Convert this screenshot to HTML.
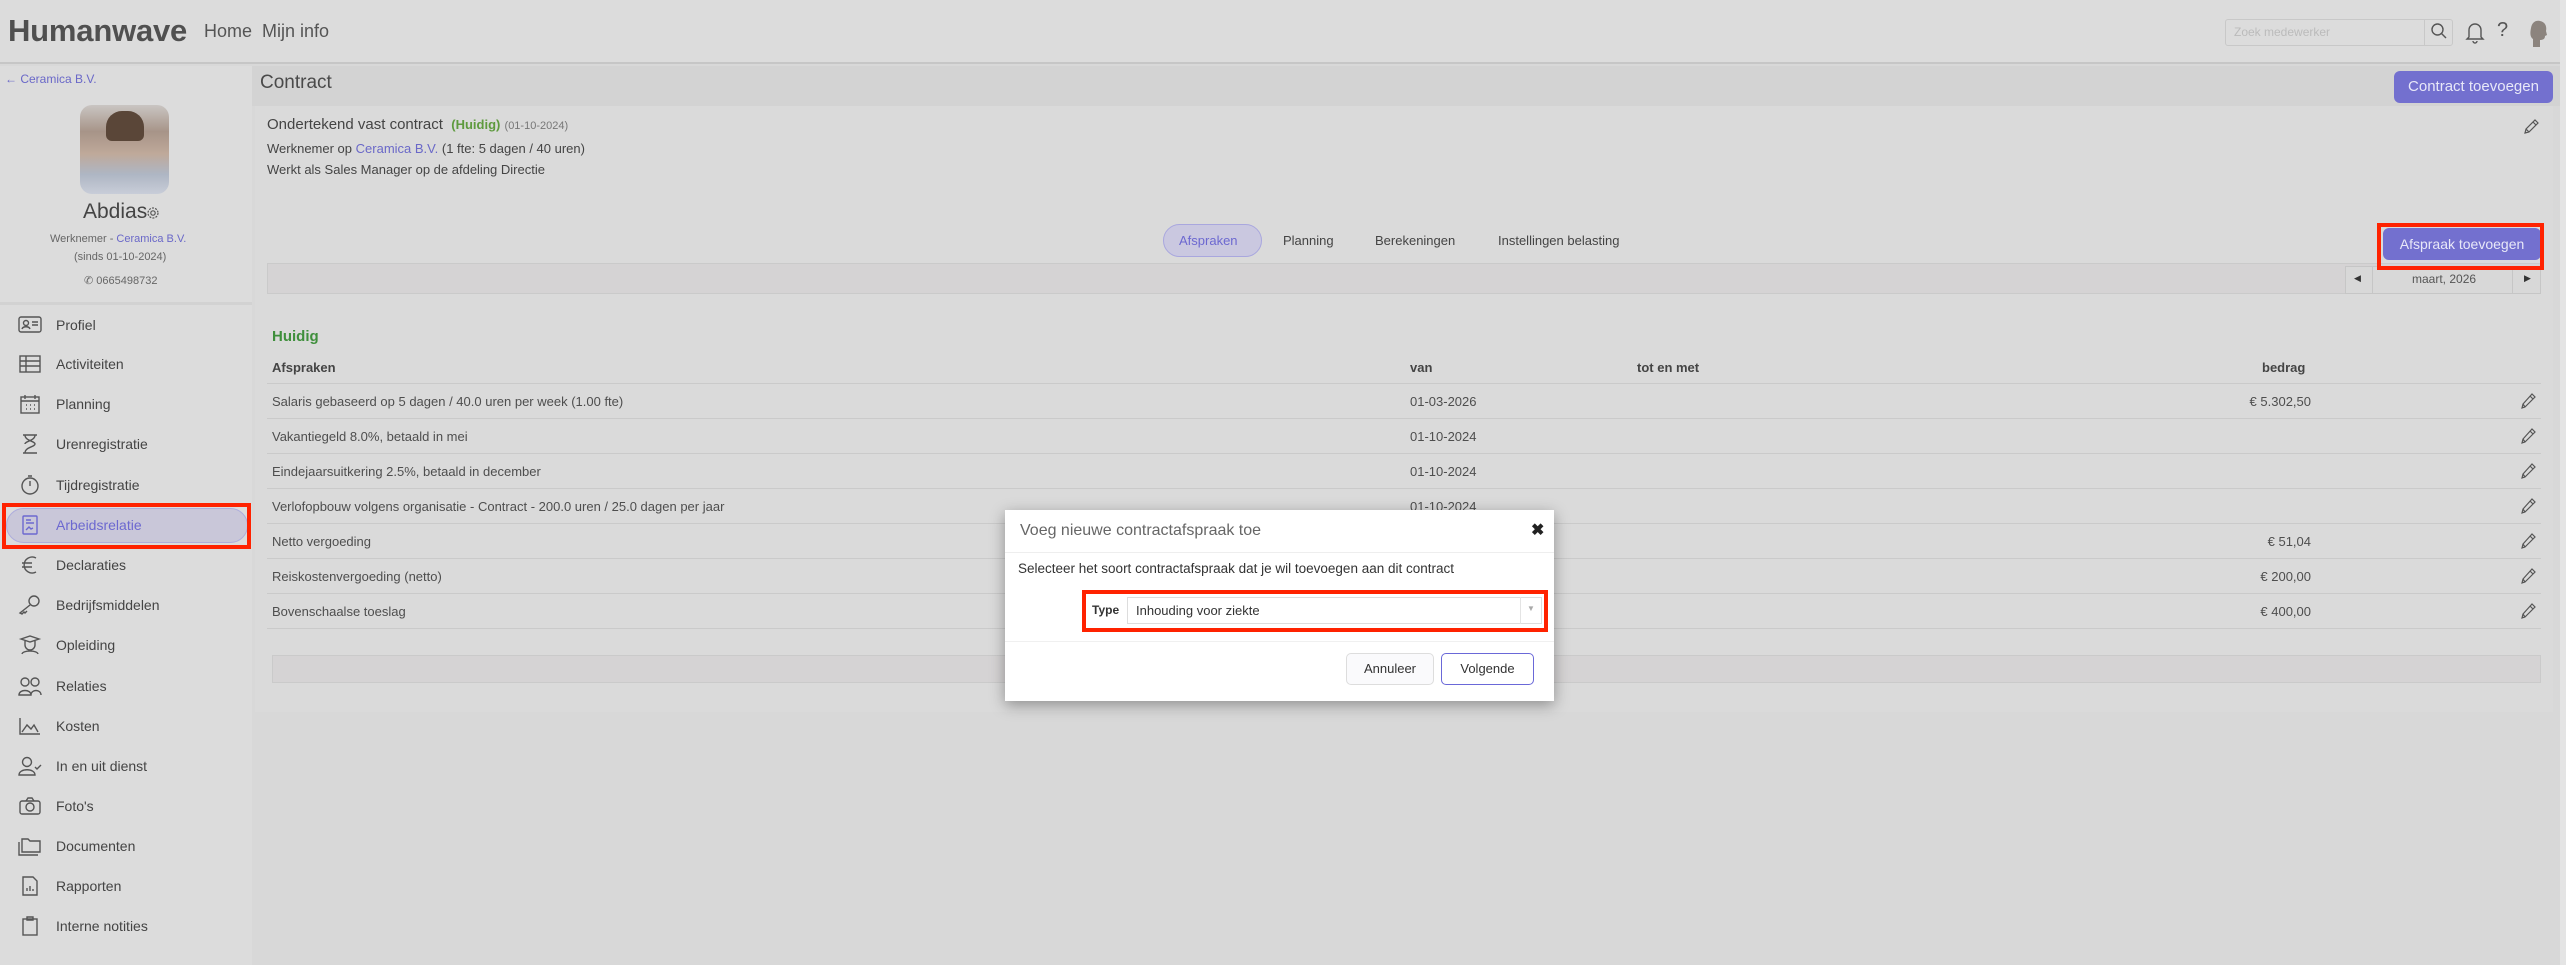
<!DOCTYPE html>
<html><head><meta charset="utf-8"><style>
*{box-sizing:border-box;margin:0;padding:0}
body{width:2566px;height:965px;overflow:hidden;background:#d8d8d8;font-family:"Liberation Sans",sans-serif;color:#4a4a4a;position:relative}
.a{position:absolute;white-space:nowrap}
.nav{position:absolute;left:18px;height:22px;font-size:14px;color:#444;display:flex;align-items:center}
.nav svg{width:24px;height:20px;margin-right:14px;stroke:#555;fill:none;stroke-width:1.4;flex:none}
.row{position:absolute;left:267px;width:2274px;height:35px;border-bottom:1px solid #cacaca;font-size:13px;color:#4e4e4e}
.row span{position:absolute;top:10px}
.pen{position:absolute;left:2253px;top:8px}
.btn{position:absolute;background:#7370cf;color:#e8e8f8;border-radius:6px;font-size:15px;text-align:center}
</style></head><body>
<!-- header -->
<div class="a" style="left:0;top:0;width:2560px;height:64px;background:#dcdcdc;border-bottom:2px solid #c6c6c6"></div>
<div class="a" style="left:8px;top:13px;font-size:31px;font-weight:bold;color:#505050;letter-spacing:-0.2px">Humanwave</div>
<div class="a" style="left:204px;top:21px;font-size:18px;color:#555">Home</div>
<div class="a" style="left:262px;top:21px;font-size:18px;color:#555">Mijn info</div>
<div class="a" style="left:2225px;top:19px;width:228px;height:27px;border:1px solid #c8c8c8;border-radius:3px"></div>
<div class="a" style="left:2424px;top:19px;width:1px;height:27px;background:#c8c8c8"></div>
<div class="a" style="left:2234px;top:25px;font-size:12px;color:#bbb">Zoek medewerker</div>
<svg class="a" style="left:2430px;top:22px" width="18" height="18" viewBox="0 0 18 18" fill="none" stroke="#555" stroke-width="1.4"><circle cx="7.5" cy="7.5" r="5.5"/><path d="M11.5 11.5L16 16"/></svg>
<svg class="a" style="left:2465px;top:20px" width="20" height="24" viewBox="0 0 20 24" fill="none" stroke="#555" stroke-width="1.4"><path d="M4 17V10a6 6 0 0112 0v7l2 2H2z"/><path d="M8 21a2 2 0 004 0"/></svg>
<div class="a" style="left:2497px;top:19px;font-size:20px;color:#555">?</div>
<svg class="a" style="left:2527px;top:19px" width="22" height="28" viewBox="0 0 22 28"><path d="M6 28V20C3 18 3 14 4 9 5 3 9 1 13 2c5 1 7 5 6 10l1 4-2 1c0 3-2 4-5 4v7z" fill="#8c847e"/></svg>
<div class="a" style="left:2560px;top:0;width:6px;height:965px;background:#e4e4e4"></div>

<!-- sidebar -->
<div class="a" style="left:0;top:66px;width:252px;height:899px;background:#dcdcdc"></div>
<div class="a" style="left:5px;top:72px;font-size:12px;color:#6a68c8">&#8592; Ceramica B.V.</div>
<div class="a" style="left:80px;top:105px;width:89px;height:89px;border-radius:12px;background:linear-gradient(180deg,#c9c5c2 0%,#a79488 30%,#bfa99a 55%,#aeb6c4 78%,#c8cdd8 100%)"></div>
<div class="a" style="left:106px;top:111px;width:38px;height:30px;border-radius:16px 16px 6px 6px;background:#5a4638"></div>
<div class="a" style="left:83px;top:200px;font-size:21px;color:#444">Abdias</div>
<svg class="a" style="left:146px;top:206px" width="14" height="14" viewBox="0 0 14 14" fill="none" stroke="#555" stroke-width="1.2"><circle cx="7" cy="7" r="2.2"/><circle cx="7" cy="7" r="5" stroke-dasharray="2 1.2"/></svg>
<div class="a" style="left:50px;top:233px;font-size:11px;color:#666">Werknemer - <span style="color:#6a68c8">Ceramica B.V.</span></div>
<div class="a" style="left:74px;top:251px;font-size:11px;color:#666">(sinds 01-10-2024)</div>
<div class="a" style="left:84px;top:274px;font-size:11px;color:#666">&#9990; 0665498732</div>
<div class="a" style="left:0;top:302px;width:252px;height:3px;background:#d2d2d2"></div>

<div class="a" style="left:6px;top:508px;width:242px;height:35px;border-radius:18px;background:#c9c7d9;border:1px solid #aeaddc"></div>
<div class="a" style="left:2px;top:503px;width:249px;height:46px;border:4px solid #ff2200"></div>

<div class="nav" style="top:314px"><svg viewBox="0 0 24 20"><rect x="1" y="2" width="22" height="15" rx="2"/><circle cx="8" cy="8" r="2.5"/><path d="M4 14c1-3 7-3 8 0M14 7h6M14 10h6"/></svg>Profiel</div>
<div class="nav" style="top:353px"><svg viewBox="0 0 24 20"><rect x="2" y="2" width="20" height="16"/><path d="M2 7h20M2 12h20M8 2v16"/></svg>Activiteiten</div>
<div class="nav" style="top:393px"><svg viewBox="0 0 24 20"><rect x="3" y="3" width="18" height="16"/><path d="M3 7h18M7 1v4M17 1v4M8 11h1M12 11h1M16 11h1M8 15h1M12 15h1M16 15h1"/></svg>Planning</div>
<div class="nav" style="top:433px"><svg viewBox="0 0 24 20"><path d="M5 1h14M5 19h14M7 1c0 6 10 6 10 9s-10 3-10 9M17 1c0 6-10 6-10 9"/></svg>Urenregistratie</div>
<div class="nav" style="top:474px"><svg viewBox="0 0 24 20"><circle cx="12" cy="11" r="8"/><path d="M12 6v5M10 1h4"/></svg>Tijdregistratie</div>
<div class="nav" style="top:514px;color:#6c68d0"><svg viewBox="0 0 24 20" style="stroke:#6c68d0"><rect x="5" y="1" width="14" height="18" rx="1"/><path d="M8 5h5M8 8h8M8 15l3-3 2 2 2-1"/></svg>Arbeidsrelatie</div>
<div class="nav" style="top:554px"><svg viewBox="0 0 24 20"><path d="M18 3a8 8 0 100 14M4 8h10M4 12h10"/></svg>Declaraties</div>
<div class="nav" style="top:594px"><svg viewBox="0 0 24 20"><circle cx="16" cy="6" r="5"/><path d="M12 10L2 18l2 1 2-2 1 1 2-2"/></svg>Bedrijfsmiddelen</div>
<div class="nav" style="top:634px"><svg viewBox="0 0 24 20"><path d="M3 4l9-3 9 3-9 3zM7 6v4a5 5 0 0010 0V6M4 19c1-4 15-4 16 0"/></svg>Opleiding</div>
<div class="nav" style="top:675px"><svg viewBox="0 0 24 20"><circle cx="7" cy="6" r="4"/><circle cx="17" cy="6" r="4"/><path d="M1 19c0-6 12-6 12 0zM13 19c0-6 10-6 10 0"/></svg>Relaties</div>
<div class="nav" style="top:715px"><svg viewBox="0 0 24 20"><path d="M2 2v16h20M4 16l5-7 4 4 3-4 4 7"/></svg>Kosten</div>
<div class="nav" style="top:755px"><svg viewBox="0 0 24 20"><circle cx="9" cy="6" r="4.5"/><path d="M1 19c0-7 16-7 16 0zM17 11l2 2 4-4"/></svg>In en uit dienst</div>
<div class="nav" style="top:795px"><svg viewBox="0 0 24 20"><rect x="2" y="5" width="20" height="13" rx="2"/><circle cx="12" cy="11" r="4"/><path d="M8 5l2-3h4l2 3"/></svg>Foto's</div>
<div class="nav" style="top:835px"><svg viewBox="0 0 24 20"><path d="M1 6v13h19M4 3h6l2 2h10v11H4z"/></svg>Documenten</div>
<div class="nav" style="top:875px"><svg viewBox="0 0 24 20"><path d="M5 1h10l4 4v14H5zM9 15v-3M12 15v-5M15 15v-2"/></svg>Rapporten</div>
<div class="nav" style="top:915px"><svg viewBox="0 0 24 20"><rect x="5" y="3" width="14" height="16"/><path d="M9 1h6v3H9z"/></svg>Interne notities</div>

<!-- content -->
<div class="a" style="left:252px;top:66px;width:2308px;height:40px;background:#d3d3d3"></div>
<div class="a" style="left:260px;top:72px;font-size:19px;color:#4a4a4a">Contract</div>
<div class="btn" style="left:2394px;top:71px;width:159px;height:32px;line-height:32px">Contract toevoegen</div>
<div class="a" style="left:255px;top:106px;width:2298px;height:606px;background:#dadada"></div>
<div class="a" style="left:267px;top:116px;font-size:15px;color:#444">Ondertekend vast contract &nbsp;<b style="color:#5e9a3e;font-size:13px">(Huidig)</b> <span style="font-size:11px;color:#777">(01-10-2024)</span></div>
<div class="a" style="left:267px;top:141px;font-size:13px;color:#444">Werknemer op <span style="color:#6a68c8">Ceramica B.V.</span> (1 fte: 5 dagen / 40 uren)</div>
<div class="a" style="left:267px;top:162px;font-size:13px;color:#444">Werkt als Sales Manager op de afdeling Directie</div>
<svg class="a" style="left:2522px;top:118px" width="18" height="18" viewBox="0 0 18 18" fill="none" stroke="#555" stroke-width="1.2"><path d="M3 15l1-4 9-9 3 3-9 9zM4 11l3 3M11 4l3 3"/></svg>

<div class="a" style="left:1163px;top:224px;width:99px;height:33px;border-radius:17px;background:#cac8e0;border:1px solid #a9a7de"></div>
<div class="a" style="left:1179px;top:233px;font-size:13px;color:#6c68d0">Afspraken</div>
<div class="a" style="left:1283px;top:233px;font-size:13px;color:#444">Planning</div>
<div class="a" style="left:1375px;top:233px;font-size:13px;color:#444">Berekeningen</div>
<div class="a" style="left:1498px;top:233px;font-size:13px;color:#444">Instellingen belasting</div>
<div class="a" style="left:267px;top:263px;width:2274px;height:31px;background:#d5d3d4;border:1px solid #cacaca"></div>
<div class="a" style="left:2345px;top:266px;width:196px;height:28px;border:1px solid #c6c6c6;background:#d8d8d8"></div>
<div class="a" style="left:2372px;top:266px;width:1px;height:28px;background:#c6c6c6"></div>
<div class="a" style="left:2512px;top:266px;width:1px;height:28px;background:#c6c6c6"></div>
<div class="a" style="left:2354px;top:273px;font-size:9px;color:#333">&#9664;</div>
<div class="a" style="left:2524px;top:273px;font-size:9px;color:#333">&#9654;</div>
<div class="a" style="left:2412px;top:272px;font-size:12px;color:#555">maart, 2026</div>
<div class="btn" style="left:2383px;top:228px;width:158px;height:32px;line-height:32px;font-size:14px">Afspraak toevoegen</div>
<div class="a" style="left:2377px;top:223px;width:167px;height:47px;border:4px solid #ff2200"></div>

<div class="a" style="left:272px;top:328px;font-size:15px;font-weight:bold;color:#3f8f3c">Huidig</div>
<div class="a" style="left:272px;top:360px;font-size:13px;font-weight:bold;color:#444">Afspraken</div>
<div class="a" style="left:1410px;top:360px;font-size:13px;font-weight:bold;color:#444">van</div>
<div class="a" style="left:1637px;top:360px;font-size:13px;font-weight:bold;color:#444">tot en met</div>
<div class="a" style="left:2262px;top:360px;font-size:13px;font-weight:bold;color:#444">bedrag</div>
<div class="a" style="left:267px;top:383px;width:2274px;height:1px;background:#cacaca"></div>

<div class="row" style="top:384px"><span style="left:5px">Salaris gebaseerd op 5 dagen / 40.0 uren per week (1.00 fte)</span><span style="left:1143px">01-03-2026</span><span style="right:230px">€ 5.302,50</span><svg class="pen" width="16" height="18" viewBox="0 0 16 18" fill="none" stroke="#555" stroke-width="1.2"><path d="M2 16l1-4 9-10 3 3-10 10zM3 12l2 3M10 4l3 3"/></svg></div>
<div class="row" style="top:419px"><span style="left:5px">Vakantiegeld 8.0%, betaald in mei</span><span style="left:1143px">01-10-2024</span><svg class="pen" width="16" height="18" viewBox="0 0 16 18" fill="none" stroke="#555" stroke-width="1.2"><path d="M2 16l1-4 9-10 3 3-10 10zM3 12l2 3M10 4l3 3"/></svg></div>
<div class="row" style="top:454px"><span style="left:5px">Eindejaarsuitkering 2.5%, betaald in december</span><span style="left:1143px">01-10-2024</span><svg class="pen" width="16" height="18" viewBox="0 0 16 18" fill="none" stroke="#555" stroke-width="1.2"><path d="M2 16l1-4 9-10 3 3-10 10zM3 12l2 3M10 4l3 3"/></svg></div>
<div class="row" style="top:489px"><span style="left:5px">Verlofopbouw volgens organisatie - Contract - 200.0 uren / 25.0 dagen per jaar</span><span style="left:1143px">01-10-2024</span><svg class="pen" width="16" height="18" viewBox="0 0 16 18" fill="none" stroke="#555" stroke-width="1.2"><path d="M2 16l1-4 9-10 3 3-10 10zM3 12l2 3M10 4l3 3"/></svg></div>
<div class="row" style="top:524px"><span style="left:5px">Netto vergoeding</span><span style="right:230px">€ 51,04</span><svg class="pen" width="16" height="18" viewBox="0 0 16 18" fill="none" stroke="#555" stroke-width="1.2"><path d="M2 16l1-4 9-10 3 3-10 10zM3 12l2 3M10 4l3 3"/></svg></div>
<div class="row" style="top:559px"><span style="left:5px">Reiskostenvergoeding (netto)</span><span style="right:230px">€ 200,00</span><svg class="pen" width="16" height="18" viewBox="0 0 16 18" fill="none" stroke="#555" stroke-width="1.2"><path d="M2 16l1-4 9-10 3 3-10 10zM3 12l2 3M10 4l3 3"/></svg></div>
<div class="row" style="top:594px"><span style="left:5px">Bovenschaalse toeslag</span><span style="right:230px">€ 400,00</span><svg class="pen" width="16" height="18" viewBox="0 0 16 18" fill="none" stroke="#555" stroke-width="1.2"><path d="M2 16l1-4 9-10 3 3-10 10zM3 12l2 3M10 4l3 3"/></svg></div>
<div class="a" style="left:272px;top:655px;width:2269px;height:28px;background:#d5d3d4;border:1px solid #cacaca"></div>

<!-- modal -->
<div class="a" style="left:1005px;top:510px;width:549px;height:191px;background:#fff;box-shadow:0 4px 14px rgba(0,0,0,.35)"></div>
<div class="a" style="left:1020px;top:522px;font-size:16px;color:#666">Voeg nieuwe contractafspraak toe</div>
<div class="a" style="left:1531px;top:520px;font-size:16px;font-weight:bold;color:#222">&#10006;</div>
<div class="a" style="left:1005px;top:552px;width:549px;height:1px;background:#eee"></div>
<div class="a" style="left:1018px;top:561px;font-size:13.5px;color:#333">Selecteer het soort contractafspraak dat je wil toevoegen aan dit contract</div>
<div class="a" style="left:1082px;top:590px;width:466px;height:42px;border:4px solid #ff2200"></div>
<div class="a" style="left:1092px;top:603px;font-size:12px;font-weight:bold;color:#333">Type</div>
<div class="a" style="left:1127px;top:597px;width:415px;height:27px;border:1px solid #ddd"></div>
<div class="a" style="left:1520px;top:597px;width:1px;height:27px;background:#e4e4e4"></div>
<div class="a" style="left:1527px;top:604px;font-size:8px;color:#aaa">&#9660;</div>
<div class="a" style="left:1136px;top:603px;font-size:13px;color:#333">Inhouding voor ziekte</div>
<div class="a" style="left:1005px;top:641px;width:549px;height:1px;background:#f0f0f0"></div>
<div class="a" style="left:1346px;top:653px;width:88px;height:32px;border:1px solid #ddd;border-radius:5px;background:#fafafc;font-size:13px;color:#333;text-align:center;line-height:30px">Annuleer</div>
<div class="a" style="left:1441px;top:653px;width:93px;height:32px;border:1px solid #6a68d8;border-radius:5px;font-size:13px;color:#333;text-align:center;line-height:30px">Volgende</div>
</body></html>
